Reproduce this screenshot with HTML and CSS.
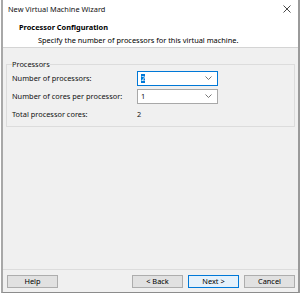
FILE: index.html
```html
<!DOCTYPE html>
<html lang="en">
<head>
    <meta charset="UTF-8">
    <title>New Virtual Machine Wizard</title>
    <link rel="stylesheet" href="styles.css">
</head>
<body>
    <div class="window">
        <div class="titlebar">
            <span class="title">New Virtual Machine Wizard</span>
            <svg class="close" width="8" height="8" viewBox="0 0 8 8"><path d="M0.5 0.5 L7.5 7.5 M7.5 0.5 L0.5 7.5" stroke="#333" stroke-width="0.9"/></svg>
        </div>

        <div class="header">
            <div class="header-title">Processor Configuration</div>
            <div class="header-sub">Specify the number of processors for this virtual machine.</div>
        </div>

        <div class="content">
            <fieldset class="group">
                <legend>Processors</legend>
                <div class="row">
                    <label>Number of processors:</label>
                    <div class="combo focused">
                        <span class="sel">2</span>
                        <svg class="arrow" width="7" height="4" viewBox="0 0 7 4"><path d="M0.5 0.5 L3.5 3.5 L6.5 0.5" fill="none" stroke="#666" stroke-width="0.9"/></svg>
                    </div>
                </div>
                <div class="row">
                    <label>Number of cores per processor:</label>
                    <div class="combo">
                        <span>1</span>
                        <svg class="arrow" width="7" height="4" viewBox="0 0 7 4"><path d="M0.5 0.5 L3.5 3.5 L6.5 0.5" fill="none" stroke="#666" stroke-width="0.9"/></svg>
                    </div>
                </div>
                <div class="row">
                    <label>Total processor cores:</label>
                    <span class="value">2</span>
                </div>
            </fieldset>
        </div>

        <div class="footer">
            <button>Help</button>
            <div class="spacer"></div>
            <button>&lt; Back</button>
            <button class="default">Next &gt;</button>
            <button>Cancel</button>
        </div>
    </div>
</body>
</html>
```

FILE: styles.css
```css
body {
    margin: 0;
    background: #ffffff;
    font-family: "Noto Sans", Arial, sans-serif;
    font-size: 7.4px;
    color: #000;
}

.window {
    margin-left: 1px;
    width: 295px;
    height: 292px;
    border-left: 2px solid #a8a8a8;
    border-right: 2px solid #9a9a9a;
    border-bottom: 1px solid #8c8c8c;
    background: #f0f0f0;
    display: flex;
    flex-direction: column;
}

.titlebar {
    height: 18px;
    background: white;
    display: flex;
    align-items: center;
    justify-content: space-between;
    padding: 0 7px 0 5px;
}

.title {
    color: #111;
}

.close {
    display: block;
}

.header {
    background: white;
    height: 26px;
    padding: 3px 0 0 16px;
    border-bottom: 1px solid #d4d4d4;
    line-height: 13px;
}

.header-title {
    font-weight: bold;
}

.header-sub {
    padding-left: 19px;
}

.content {
    padding: 11px 3px 0 3px;
    flex: 1;
}

.group {
    margin: 0;
    padding: 0 5px 3px 5px;
    border: 1px solid #dcdcdc;
}

.group legend {
    padding: 0;
    line-height: 10px;
    color: #111;
}

.row {
    display: flex;
    align-items: center;
    height: 18px;
    color: #111;
}

.row label {
    width: 125px;
}

.combo {
    box-sizing: border-box;
    width: 81px;
    height: 15px;
    border: 1px solid #a8a8a8;
    background: white;
    display: flex;
    align-items: center;
    justify-content: space-between;
    padding: 0 5px 0 3px;
}

.combo.focused {
    border-color: #0078d7;
}

.combo .sel {
    background: #0078d7;
    color: white;
    line-height: 9px;
}

.arrow {
    display: block;
}

.footer {
    border-top: 1px solid #dcdcdc;
    display: flex;
    gap: 5px;
    padding: 5px 3px 4px 4px;
}

.spacer {
    flex: 1;
}

button {
    box-sizing: border-box;
    width: 51px;
    height: 13px;
    padding: 0;
    font-family: inherit;
    font-size: 7.4px;
    line-height: 11px;
    background: #e1e1e1;
    border: 1px solid #adadad;
    color: #000;
}

button.default {
    background: #e5f1fb;
    border-color: #0078d7;
}
```
